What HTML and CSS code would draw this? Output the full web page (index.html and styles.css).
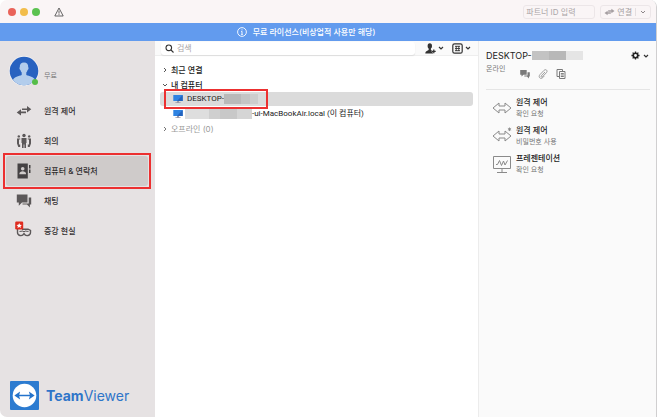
FILE: index.html
```html
<!DOCTYPE html>
<html lang="ko">
<head>
<meta charset="utf-8">
<title>TeamViewer</title>
<link rel="stylesheet" href="styles.css">
</head>
<body>
<div class="window">
  <header class="titlebar">
    <span class="dot dot-close"></span>
    <span class="dot dot-min"></span>
    <span class="dot dot-max"></span>
    <svg class="warn" viewBox="0 0 10 10" fill="none" stroke="#555" stroke-width=".9" stroke-linejoin="round"><path d="M5 1 9.2 9H.8Z"/><path d="M5 3.6v3M5 7.2v.9"/></svg>
    <input class="partner" type="text" placeholder="파트너 ID 입력" aria-label="파트너 ID">
    <div class="connect">
      <button class="connect-main" type="button">
        <svg class="connect-icon" viewBox="0 0 16 12" fill="#a59fa1"><path d="M15.500 4.500 10.800 1v2.500H6v2h4.800V8Z"/><path d="M.5 7.500 5.200 11V8.500H10v-2H5.200V4Z"/></svg>연결
      </button>
      <button class="connect-more" type="button" aria-label="연결 옵션"><svg class="chev" viewBox="0 0 6 6" fill="none" stroke="#8d8789"><path d="m1 2 2 2 2-2"/></svg></button>
    </div>
  </header>

  <div class="banner">
    <svg class="info" viewBox="0 0 10 10" fill="none" stroke="#fff"><circle cx="5" cy="5" r="4.4" stroke-width=".9"/><path d="M5 4.3v3.2M5 2.4v1M4.2 7.4h1.6M4.2 4.5H5" stroke-width=".9"/></svg>
    <span>무료 라이선스(비상업적 사용만 해당)</span>
  </div>

  <div class="columns">
    <aside class="sidebar">
      <div class="profile">
        <div class="avatar">
          <svg viewBox="0 0 30 30"><defs><clipPath id="face"><circle cx="15" cy="15" r="14.3"/></clipPath></defs><circle cx="15" cy="15" r="15" fill="#f4f2f3"/><circle cx="15" cy="15" r="14.3" fill="#2862c0"/><path clip-path="url(#face)" fill="#b3cdec" d="M15 6.500c-3 0-4.400 2-4.200 4.700-.8.300-.3 2.300.6 2.700.3 1.300.8 2 1.300 2.600v2.600c-3 1.200-7.500 1.500-8.700 5V30h22v-5.900c-1.200-3.500-5.700-3.800-8.700-5v-2.600c.5-.6 1-1.300 1.300-2.600.9-.4 1.400-2.400.6-2.700.2-2.700-1.200-4.700-4.200-4.700Z"/></svg>
          <span class="presence"></span>
        </div>
        <span class="plan">무료</span>
      </div>
      <nav class="nav">
        <a class="nav-item" href="#"><svg viewBox="0 0 16 16" fill="#5c5859"><path d="M15.300 6.200 11 3v2.400H6v1.700h5v2.300Z"/><path d="M.7 9.400 5 12.600v-2.400h5V8.500H5V6.200Z"/></svg>원격 제어</a>
        <a class="nav-item" href="#"><svg viewBox="0 0 16 16" fill="#5c5859"><circle cx="8" cy="2.500" r="1.700"/><path d="M5.500 5h5v5H10v5H8.400v-3.500h-.8V15H6v-5h-.5Z"/><circle cx="2.800" cy="3.400" r="1.200"/><circle cx="13.200" cy="3.400" r="1.200"/><path d="M1 5.400h3.200v1.200H3v5h1.200V14H2.300L1 10.500ZM15 5.400h-3.200v1.200H13v5h-1.200V14h1.900L15 10.500Z"/></svg>회의</a>
        <a class="nav-item current" href="#"><svg viewBox="0 0 16 16"><path fill="#454243" d="M1.500.5h10.300v15H1.500ZM13 2h1.500v3.500H13ZM13 6.500h1.500V10H13Z"/><circle cx="6.700" cy="5.700" r="1.800" fill="#d0cccb"/><path fill="#d0cccb" d="M3.300 11.200c0-3.800 6.800-3.800 6.800 0Z"/></svg>컴퓨터 &amp; 연락처</a>
        <a class="nav-item" href="#"><svg viewBox="0 0 16 16" fill="#5c5859"><path d="M.8 1.500h10.700v8H6L2.800 12.700V9.500h-2Z"/><path d="M12.700 4.500h2.500v7h-1.300v3L11 11.500H6.500v-1h6.200Z"/></svg>채팅</a>
        <a class="nav-item" href="#"><svg viewBox="0 0 16 16"><path fill="none" stroke="#5c5859" stroke-width="1.400" d="M1.500 6v3.500c0 3 4.500 4.600 6.500 1.200 2 3.400 6.500 1.800 6.500-1.200V7.400L12 6.200H6"/><path fill="none" stroke="#5c5859" d="M3.500 8.500 7 8l1 1 1-1 3.500.5"/><rect x="-.8" y="-1.500" width="8" height="8" rx="1.200" fill="#df2c20"/><path fill="#fff" d="m3.200 0 .8 1.700 1.900.2-1.400 1.300.4 1.900-1.700-1-1.700 1 .4-1.900L.5 1.900l1.900-.2Z"/></svg>증강 현실</a>
      </nav>
      <div class="brand">
        <svg class="brand-mark" viewBox="0 0 30 30"><rect width="30" height="30" rx="1" fill="#2c7bd0"/><circle cx="15" cy="15" r="12.200" fill="#fff"/><path fill="#2473cb" d="m4.500 15 6-4.200-1 3.300h11l-1-3.300 6 4.200-6 4.200 1-3.300h-11l1 3.300Z"/></svg>
        <span class="brand-name"><b>Team</b>Viewer</span>
      </div>
    </aside>

    <main class="contacts">
      <div class="toolbar">
        <label class="search">
          <svg viewBox="0 0 9 9" fill="none" stroke="#333" stroke-width="1.100"><circle cx="3.800" cy="3.800" r="2.800"/><path d="m6 6 2.500 2.500"/></svg>
          <input type="search" placeholder="검색" aria-label="검색">
        </label>
        <button class="tool" type="button" aria-label="연락처 추가"><svg class="tool-icon" viewBox="0 0 11 11" fill="#333"><ellipse cx="4.800" cy="3" rx="2.200" ry="2.700"/><path d="M3.700 5h2.200v1.700L8 8v2.500H.3C.3 7.700 3.700 8 3.700 6.600Z"/><path d="M8.700 6v4M6.700 8h4" stroke="#fff" stroke-width="2.200"/><path d="M8.800 6.400v3.800M6.900 8.300h3.800" stroke="#333" stroke-width="1.300"/></svg><svg class="chev" viewBox="0 0 6 6" fill="none" stroke="#333" stroke-width="1.200"><path d="m1 2 2 2 2-2"/></svg></button>
        <button class="tool" type="button" aria-label="보기"><svg class="tool-icon" viewBox="0 0 11 11" fill="none" stroke="#333"><rect x=".8" y=".8" width="9.400" height="9.400" rx="1.800" stroke-width="1.200"/><path d="M3 3.300h5M3 5.500h5M3 7.700h5M4.200 3v5M6.800 3v5" stroke-width=".9"/></svg><svg class="chev" viewBox="0 0 6 6" fill="none" stroke="#333" stroke-width="1.200"><path d="m1 2 2 2 2-2"/></svg></button>
      </div>
      <ul class="tree">
        <li class="row group"><svg class="chev" viewBox="0 0 6 6" fill="none" stroke="#555"><path d="m2 1 2 2-2 2"/></svg>최근 연결</li>
        <li>
          <div class="row group"><svg class="chev" viewBox="0 0 6 6" fill="none" stroke="#555"><path d="m1 2 2 2 2-2"/></svg>내 컴퓨터</div>
          <div class="row device chosen">
            <svg class="monitor" viewBox="0 0 10 10"><path fill="#2e83e2" d="M.3 1h9.400v6H.3Z"/><path fill="#2363bd" d="M9.700 1v6H4Z"/><path fill="#99a" d="M4 7h2v1.200h1.600V9H2.400v-.8H4Z"/></svg>DESKTOP-<span class="mask mask-short"></span>
          </div>
        </li>
        <li class="row device">
          <svg class="monitor" viewBox="0 0 10 10"><path fill="#2e83e2" d="M.3 1h9.400v6H.3Z"/><path fill="#2363bd" d="M9.700 1v6H4Z"/><path fill="#99a" d="M4 7h2v1.200h1.600V9H2.400v-.8H4Z"/></svg><span class="mask mask-long"></span>-ui-MacBookAir.local (이 컴퓨터)
        </li>
        <li class="row group offline"><svg class="chev" viewBox="0 0 6 6" fill="none" stroke="#777"><path d="m2 1 2 2-2 2"/></svg>오프라인 (0)</li>
      </ul>
    </main>

    <section class="details">
      <div class="head">
        <h1>DESKTOP-<span class="mask mask-title"></span></h1>
        <button class="tool" type="button" aria-label="설정"><svg class="gear" viewBox="0 0 10 10" fill="none" stroke="#222"><circle cx="5" cy="5" r="2.500" stroke-width="1.800"/><path stroke-width="1.500" d="M5 .5v1.800M5 7.700v1.800M.5 5h1.800M7.700 5h1.800M1.800 1.800l1.300 1.300M6.900 6.900l1.300 1.300M8.200 1.800 6.900 3.100M3.100 6.900 1.800 8.200"/></svg><svg class="chev" viewBox="0 0 6 6" fill="none" stroke="#333" stroke-width="1.200"><path d="m1 2 2 2 2-2"/></svg></button>
      </div>
      <div class="status">
        <span class="online">온라인</span>
        <div class="quick">
          <button type="button" aria-label="채팅"><svg viewBox="0 0 10 10" fill="#7a7a7a"><path d="M.2 1h6.500v4.700H3.500L1.500 7.500V5.700H.2Z"/><path d="M7.500 3.300h2.300v4.200H9v2L7 7.500H4.300v-1h3.200Z"/></svg></button>
          <button type="button" aria-label="파일"><svg viewBox="0 0 10 10" fill="none" stroke="#929292" stroke-width=".9"><path d="m7 3-3.700 3.900c-.7.900.4 1.700 1.100 1l4-4.200c1.800-2-.6-4.100-2.300-2.400L2 5.600C-.2 8 2.500 10.700 4.700 8.700L6.200 7.100"/></svg></button>
          <button type="button" aria-label="복사"><svg viewBox="0 0 10 10" fill="none" stroke="#7a7a7a"><path d="M3 7.500H1v-7h5.500V2M3.500 2.500H9v7H3.500ZM4.800 4.600h3M4.800 6h3M4.800 7.500h3"/></svg></button>
        </div>
      </div>
      <ul class="actions">
        <li><svg viewBox="0 0 20 20" fill="none" stroke="#8a8a8a"><path d="m1 10 6-5v3h6V5l6 5-6 5v-3H7v3Z"/></svg><div><strong>원격 제어</strong><small>확인 요청</small></div></li>
        <li><svg viewBox="0 0 20 20" fill="none" stroke="#8a8a8a"><path d="m1 10 6-5v3h6V5l6 5-6 5v-3H7v3Z"/><path d="M17.500 1.500v3.600M15.900 2.400l3.200 1.800M19.100 2.400l-3.200 1.800" stroke-width=".9"/></svg><div><strong>원격 제어</strong><small>비밀번호 사용</small></div></li>
        <li><svg viewBox="0 0 20 20" fill="none" stroke="#8a8a8a"><path d="M1.500 2.500h17v12h-17ZM10 14.500V18M5 18.500h10M4 10.500h1.500l2-4 2 5 2-4.500 1.500 4 2.500-4.500"/></svg><div><strong>프레젠테이션</strong><small>확인 요청</small></div></li>
      </ul>
    </section>
  </div>
</div>
</body>
</html>
```
FILE: styles.css
```css
*, *::after { box-sizing: border-box; }

body {
  margin: 0;
  background: #fff;
  color: #222;
  font: 8px/10px Inter, "Noto Sans CJK KR", sans-serif;
}

svg { display: block; flex: none; overflow: visible; }
button { display: flex; align-items: center; padding: 0; border: 0; background: none; color: inherit; font: inherit; }
input { min-width: 0; border: 0; background: none; color: inherit; font: inherit; outline: 0; }
input::placeholder { color: #aaa5a7; opacity: 1; }
ul { margin: 0; padding: 0; list-style: none; }

.window {
  display: flex;
  flex-direction: column;
  min-height: 100vh;
  margin-right: 1px;
  border-right: 1px solid #d0cfd0;
  border-radius: 7px 7px 0 7px;
  overflow: hidden;
}

.titlebar {
  display: flex;
  align-items: center;
  height: 23px;
  padding: 0 5px 0 8px;
  background: #faf5f6;
}
.dot { width: 8px; height: 8px; margin-right: 4px; border-radius: 50%; }
.dot-close { background: #e9635a; }
.dot-min { background: #f2bd4b; }
.dot-max { background: #5bc250; }
.warn { width: 10px; height: 10px; margin-left: 10px; }
.partner {
  width: 72px;
  height: 14px;
  margin-left: auto;
  padding: 0 2px;
  border: 1px solid #ece6e8;
  border-radius: 3px;
}
.connect {
  display: flex;
  align-items: center;
  height: 14px;
  margin-left: 5px;
  border: 1px solid #ece6e8;
  border-radius: 3px;
  color: #a59fa1;
}
.connect-main { gap: 2px; padding: 0 3px; }
.connect-icon { width: 11px; height: 8px; }
.connect-more { height: 8px; padding: 0 4px; border-left: 1px solid #e4dee0; }
.chev { width: 6px; height: 6px; }

.banner {
  display: flex;
  align-items: center;
  justify-content: center;
  gap: 6px;
  height: 18px;
  padding-right: 44px;
  background: #629bee;
  color: #fff;
  font-weight: 500;
}
.info { width: 10px; height: 10px; }

.columns {
  display: grid;
  grid-template-columns: 155px 1fr 178px;
  flex: 1;
}

.sidebar {
  display: flex;
  flex-direction: column;
  padding: 15px 6px 7px;
  background: #e6e2e3;
}
.profile { display: flex; align-items: center; gap: 5px; padding-left: 3px; }
.avatar { position: relative; width: 30px; height: 30px; }
.presence {
  position: absolute;
  right: 1px;
  bottom: 1px;
  width: 6px;
  height: 6px;
  border-radius: 50%;
  background: #55bd48;
}
.plan { padding-top: 10px; color: #777; font-size: 7px; }
.nav { display: grid; margin-top: 10px; }
.nav-item {
  position: relative;
  display: flex;
  align-items: center;
  gap: 12px;
  height: 30px;
  margin-right: 1px;
  padding-left: 10px;
  border-radius: 3px;
  color: #302d2e;
  font-weight: 500;
  text-decoration: none;
}
.nav-item svg { width: 16px; height: 16px; }
.current { background: #cfcbca; }
.current::after,
.chosen::after {
  position: absolute;
  inset: -3px;
  border: 2px solid #ec3030;
  content: "";
}
.brand { display: flex; align-items: center; gap: 7px; margin-top: auto; padding-left: 4px; }
.brand-mark { width: 29px; height: 29px; }
.brand-name { color: #2e75c9; font-size: 14px; line-height: 18px; }

.contacts { min-width: 0; background: #fff; }
.toolbar {
  display: flex;
  align-items: center;
  gap: 8px;
  height: 15px;
  padding: 0 7px 0 6px;
  border-bottom: 1px solid #eee;
  background: #fafafa;
}
.search {
  display: flex;
  flex: 1;
  align-items: center;
  gap: 3px;
  height: 13px;
  margin-right: 2px;
  padding-left: 4px;
  border-radius: 3px;
  background: #fff;
  box-shadow: 0 1px 1px #ddd;
}
.search svg { width: 9px; height: 9px; }
.search input { flex: 1; padding: 0; }
.tool { gap: 2px; }
.tool-icon { width: 11px; height: 11px; }

.tree { display: grid; gap: 1px; padding: 7px 5px 0; }
.row { display: flex; align-items: center; height: 14px; white-space: nowrap; }
.group { gap: 2px; padding-left: 2px; font-weight: 500; }
.group .chev { margin-right: 1px; }
.offline { color: #9a9a9a; font-weight: 400; }
.device { padding-left: 13px; font-family: Roboto, "Noto Sans CJK KR", sans-serif; }
.monitor { width: 10px; height: 10px; margin-right: 4px; }
.chosen { position: relative; border-radius: 3px; background: #dbdbdb; }
.chosen::after { right: auto; left: 4px; width: 104px; }
.mask { flex: none; height: 10px; }
.mask-short { width: 34px; background: linear-gradient(90deg, #b9b9b9 50%, #c4c4c4 50% 75%, #cdcdcd 75%); }
.mask-long { width: 67px; margin-left: -2px; background: linear-gradient(90deg, #dedede 36%, #cfcfcf 36% 52%, #c8c8c8 52% 78%, #d5d5d5 78%); }

.details { padding: 9px 6px 0 7px; border-left: 1px solid #ececec; background: #fafafa; }
.head { display: flex; align-items: center; justify-content: space-between; padding-right: 1px; }
h1 { display: flex; align-items: center; margin: 0; font-size: 9px; font-weight: 400; line-height: 11px; }
.mask-title { width: 51px; height: 9px; background: linear-gradient(90deg, #c3c3c3 34%, #b8b8b8 34% 67%, #e5e5e5 67%); }
.gear { width: 9px; height: 9px; }
.head .tool { gap: 3px; }
.status { display: flex; gap: 15px; height: 29px; padding-top: 3px; border-bottom: 1px solid #e5e5e5; }
.online { color: #777; font-size: 7px; }
.quick { display: flex; gap: 8px; padding-top: 5px; }
.quick button { height: 10px; }
.quick svg { width: 10px; height: 10px; }
.actions { display: grid; gap: 4px; padding: 6px 0 0 6px; }
.actions li { display: flex; align-items: center; gap: 4px; height: 24px; }
.actions svg { width: 20px; height: 20px; }
.actions strong,
.actions small { display: block; line-height: 12px; }
.actions strong { font-size: 8px; font-weight: 500; }
.actions small { color: #777; font-size: 7px; }
```
